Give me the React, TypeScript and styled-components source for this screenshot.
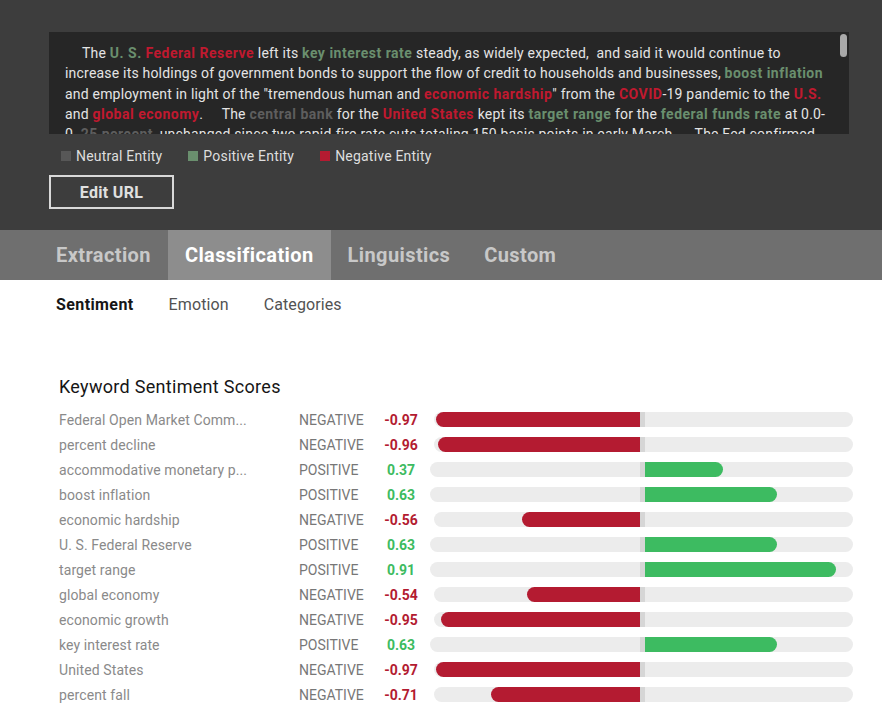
import React from "react";
import styled, { createGlobalStyle } from "styled-components";

const Global = createGlobalStyle`
  html, body { margin: 0; padding: 0; background: #ffffff; }
  body { font-family: Roboto, "Liberation Sans", sans-serif; }
  * { box-sizing: border-box; }
`;

const C = {
  pos: "#6a8f6e",
  neg: "#c0192f",
  neu: "#5e5e5e",
};

const Top = styled.section`
  background: #3d3d3d;
  padding: 32px 33px 21px 49px;
`;

const TextBox = styled.div`
  position: relative;
  width: 800px;
  height: 102px;
  background: #262626;
  overflow: hidden;
  padding: 11px 16px 0 16px;
`;

const Para = styled.p`
  margin: 0;
  color: #e4e4e4;
  font-size: 14px;
  line-height: 20.3px;
  letter-spacing: 0.2px;
  white-space: nowrap;
  text-indent: 17px;
`;

const Ent = styled.span<{ $t: "pos" | "neg" | "neu" }>`
  font-weight: 700;
  letter-spacing: 0.5px;
  color: ${(p) => C[p.$t]};
`;

const Scroll = styled.div`
  position: absolute;
  top: 2px;
  right: 2px;
  width: 7px;
  height: 23px;
  border-radius: 4px;
  background: #a9a9a9;
`;

const Legend = styled.div`
  display: flex;
  align-items: center;
  gap: 26px;
  margin: 12px 0 0 12px;
  height: 20px;
`;

const LegendItem = styled.div`
  display: flex;
  align-items: center;
  gap: 5px;
  color: #dedede;
  font-size: 14px;
  letter-spacing: 0.2px;
`;

const Swatch = styled.span<{ $c: string }>`
  width: 10px;
  height: 10px;
  background: ${(p) => p.$c};
`;

const EditButton = styled.button`
  margin-top: 9px;
  width: 125px;
  height: 34px;
  background: transparent;
  border: 2px solid #d9d9d9;
  color: #e0e0e0;
  font-family: inherit;
  font-size: 16px;
  font-weight: 700;
  letter-spacing: 0.3px;
  display: flex;
  align-items: center;
  justify-content: center;
  padding: 0;
`;

const TabBar = styled.nav`
  display: flex;
  background: #6f6f6f;
  height: 50px;
  padding-left: 39px;
`;

const Tab = styled.div<{ $active?: boolean }>`
  display: flex;
  align-items: center;
  padding: 0 17px;
  font-size: 20px;
  font-weight: 700;
  letter-spacing: 0.4px;
  color: ${(p) => (p.$active ? "#ffffff" : "#c8c8c8")};
  background: ${(p) => (p.$active ? "#8d8d8d" : "transparent")};
`;

const Body = styled.main`
  background: #ffffff;
  padding: 12px 0 0 56px;
`;

const SubTabs = styled.div`
  display: flex;
  gap: 35px;
  height: 24px;
  align-items: center;
`;

const SubTab = styled.div<{ $active?: boolean }>`
  font-size: 16px;
  letter-spacing: ${(p) => (p.$active ? 0.4 : 0.1)}px;
  font-weight: ${(p) => (p.$active ? 700 : 400)};
  color: ${(p) => (p.$active ? "#161616" : "#525252")};
`;

const Heading = styled.h2`
  margin: 59px 0 0 3px;
  font-size: 18px;
  font-weight: 400;
  letter-spacing: 0.3px;
  color: #161616;
  line-height: 24px;
`;

const Rows = styled.div`
  margin: 8px 0 0 3px;
  width: 794px;
`;

const Row = styled.div`
  display: flex;
  align-items: center;
  height: 25px;
`;

const Label = styled.div`
  width: 240px;
  font-size: 14px;
  color: #8a8a8a;
  letter-spacing: 0.1px;
  white-space: nowrap;
`;

const Kind = styled.div`
  width: 84px;
  font-size: 14px;
  color: #777777;
`;

const Score = styled.div<{ $neg: boolean }>`
  width: 36px;
  text-align: center;
  font-size: 14px;
  font-weight: 700;
  color: ${(p) => (p.$neg ? "#b31b31" : "#3dbb61")};
`;

const Track = styled.div<{ $neg: boolean }>`
  flex: 1;
  display: flex;
  height: 15px;
  margin-left: ${(p) => (p.$neg ? 15 : 11)}px;
  background: #ececec;
  border-radius: 8px;
`;

const Half = styled.div<{ $side: "left" | "right" }>`
  display: flex;
  justify-content: ${(p) => (p.$side === "left" ? "flex-end" : "flex-start")};
  ${(p) => (p.$side === "left" ? "flex: 1;" : "width: 208px;")}
`;

const Marker = styled.div`
  width: 5px;
  background: #d6d6d6;
`;

const Fill = styled.div<{ $neg: boolean }>`
  height: 100%;
  max-width: 100%;
  background: ${(p) => (p.$neg ? "#b41b31" : "#3dbb61")};
  border-radius: ${(p) => (p.$neg ? "8px 0 0 8px" : "0 8px 8px 0")};
`;

const data: [string, number][] = [
  ["Federal Open Market Comm...", -0.97],
  ["percent decline", -0.96],
  ["accommodative monetary p...", 0.37],
  ["boost inflation", 0.63],
  ["economic hardship", -0.56],
  ["U. S. Federal Reserve", 0.63],
  ["target range", 0.91],
  ["global economy", -0.54],
  ["economic growth", -0.95],
  ["key interest rate", 0.63],
  ["United States", -0.97],
  ["percent fall", -0.71],
];

const sp = "\u00a0\u00a0\u00a0\u00a0\u00a0";

export default function App() {
  return (
    <>
      <Global />
      <Top>
        <TextBox>
          <Para>
            The <Ent $t="pos">U. S.</Ent> <Ent $t="neg">Federal Reserve</Ent> left its{" "}
            <Ent $t="pos">key interest rate</Ent> steady, as widely expected,{"\u00a0"} and said it would continue to
            <br />
            increase its holdings of government bonds to support the flow of credit to households and businesses,{" "}
            <Ent $t="pos">boost inflation</Ent>
            <br />
            and employment in light of the "tremendous human and <Ent $t="neg">economic hardship</Ent>" from the{" "}
            <Ent $t="neg">COVID</Ent>-19 pandemic to the <Ent $t="neg">U.S.</Ent>
            <br />
            and <Ent $t="neg">global economy</Ent>.{sp}The <Ent $t="neu">central bank</Ent> for the{" "}
            <Ent $t="neg">United States</Ent> kept its <Ent $t="pos">target range</Ent> for the{" "}
            <Ent $t="pos">federal funds rate</Ent> at 0.0-
            <br />
            0. <Ent $t="neu">25 percent</Ent>, unchanged since two rapid-fire rate cuts totaling 150 basis points in
            early March.{sp}The Fed confirmed
          </Para>
          <Scroll />
        </TextBox>
        <Legend>
          <LegendItem>
            <Swatch $c="#575757" />
            Neutral Entity
          </LegendItem>
          <LegendItem>
            <Swatch $c="#6a8f6e" />
            Positive Entity
          </LegendItem>
          <LegendItem>
            <Swatch $c="#b41b31" />
            Negative Entity
          </LegendItem>
        </Legend>
        <EditButton>Edit URL</EditButton>
      </Top>
      <TabBar>
        <Tab>Extraction</Tab>
        <Tab $active>Classification</Tab>
        <Tab>Linguistics</Tab>
        <Tab>Custom</Tab>
      </TabBar>
      <Body>
        <SubTabs>
          <SubTab $active>Sentiment</SubTab>
          <SubTab>Emotion</SubTab>
          <SubTab>Categories</SubTab>
        </SubTabs>
        <Heading>Keyword Sentiment Scores</Heading>
        <Rows>
          {data.map(([label, v]) => {
            const neg = v < 0;
            const w = Math.abs(v) * 210;
            return (
              <Row key={label}>
                <Label>{label}</Label>
                <Kind>{neg ? "NEGATIVE" : "POSITIVE"}</Kind>
                <Score $neg={neg}>{v.toFixed(2)}</Score>
                <Track $neg={neg}>
                  <Half $side="left">{neg && <Fill $neg style={{ width: w }} />}</Half>
                  <Marker />
                  <Half $side="right">{!neg && <Fill $neg={false} style={{ width: w }} />}</Half>
                </Track>
              </Row>
            );
          })}
        </Rows>
      </Body>
    </>
  );
}
